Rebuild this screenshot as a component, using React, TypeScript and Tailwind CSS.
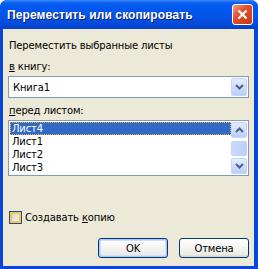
import React from "react";

const bodyFont = { fontFamily: '"DejaVu Sans", Verdana, sans-serif' };
const titleFont = { fontFamily: '"Liberation Sans", Arial, sans-serif' };

function ChevronDown() {
  return (
    <svg width="9" height="6" viewBox="0 0 9 6">
      <path d="M1 1 L4.5 4.5 L8 1" fill="none" stroke="#4D6185" strokeWidth="2" />
    </svg>
  );
}
function ChevronUp() {
  return (
    <svg width="9" height="6" viewBox="0 0 9 6">
      <path d="M1 5 L4.5 1.5 L8 5" fill="none" stroke="#4D6185" strokeWidth="2" />
    </svg>
  );
}

export default function App() {
  return (
    <div className="w-[258px] h-[269px] bg-white" style={bodyFont}>
      <div className="w-[258px] h-[269px] flex flex-col rounded-t-[7px] overflow-hidden bg-[#0846d8]">
        {/* Title bar */}
        <div className="h-[29px] flex items-center justify-between pl-[7px] pr-[5px] bg-[linear-gradient(to_bottom,#3a8cff_0px,#0a5ef0_3px,#0058ee_8px,#0553e6_18px,#0447d5_26px,#0840c4_29px)]">
          <span style={titleFont} className="text-white font-bold text-[12px] tracking-[0.1px] [text-shadow:1px_1px_0_#0a1f78]">
            Переместить или скопировать
          </span>
          <div className="w-[21px] h-[21px] rounded-[3px] border border-white flex items-center justify-center bg-[linear-gradient(135deg,#f2a08a,#e0512e_40%,#c9380f)]">
            <svg width="11" height="11" viewBox="0 0 11 11">
              <path d="M1.5 1.5 L9.5 9.5 M9.5 1.5 L1.5 9.5" stroke="white" strokeWidth="2.2" />
            </svg>
          </div>
        </div>
        {/* Body */}
        <div className="flex-1 ml-[3px] mr-[4px] mb-[3px] bg-[#ece9d8] flex flex-col px-[5px] text-[10px] tracking-[-0.15px] text-black leading-[13px]">
          <div className="mt-[10px] pl-[1px]">Переместить выбранные листы</div>
          <div className="mt-[8px] pl-[1px]">
            <span className="underline">в</span> книгу:
          </div>
          <div className="mt-[3px] h-[22px] border border-[#7f9db9] bg-white flex items-center justify-between pl-[4px] pr-[1px]">
            <span>Книга1</span>
            <div className="w-[16px] h-[18px] rounded-[2px] border border-[#c3d3fd] bg-[linear-gradient(to_bottom,#e4ecfe,#b9cdf9)] flex items-center justify-center">
              <ChevronDown />
            </div>
          </div>
          <div className="mt-[6px] pl-[1px]">
            <span className="underline">п</span>еред листом:
          </div>
          <div className="mt-[3px] h-[56px] border border-[#7f9db9] bg-white flex p-[1px]">
            <div className="flex-1 flex flex-col">
              <div className="h-[13px] bg-[#316ac5] text-white pl-[2px] outline outline-1 outline-dotted outline-[#f0b030] -outline-offset-1 leading-[13px]">
                Лист4
              </div>
              <div className="h-[13px] pl-[2px]">Лист1</div>
              <div className="h-[13px] pl-[2px]">Лист2</div>
              <div className="h-[13px] pl-[2px]">Лист3</div>
            </div>
            <div className="w-[16px] flex flex-col justify-between">
              <div className="h-[16px] rounded-[2px] border border-[#c3d3fd] bg-[linear-gradient(to_bottom,#e4ecfe,#b9cdf9)] flex items-center justify-center">
                <ChevronUp />
              </div>
              <div className="h-[15px] rounded-[2px] border border-[#c3d3fd] bg-[linear-gradient(to_right,#cad9fb,#bdd0fa)]" />
              <div className="h-[16px] rounded-[2px] border border-[#c3d3fd] bg-[linear-gradient(to_bottom,#e4ecfe,#b9cdf9)] flex items-center justify-center">
                <ChevronDown />
              </div>
            </div>
          </div>
          <div className="mt-[35px] flex items-center gap-[3px] pl-[1px]">
            <div className="w-[13px] h-[13px] border border-[#1c5180] bg-[#dcdcd7]">
              <div className="w-full h-full border-2 border-[#f9c35e] bg-[linear-gradient(135deg,#d8d6cc,#f4f3ee)]" />
            </div>
            <span>
              Создавать <span className="underline">к</span>опию
            </span>
          </div>
          <div className="mt-[14px] flex justify-end gap-[11px]">
            <div className="w-[70px] h-[20px] rounded-[3px] border border-[#003c74] bg-[linear-gradient(to_bottom,#ffffff,#ecebe6_85%,#d6d0c5)] flex items-center justify-center shadow-[inset_0_0_0_1px_#a9c6f5,inset_0_0_0_2px_#cee0fb]">
              OK
            </div>
            <div className="w-[70px] h-[20px] rounded-[3px] border border-[#003c74] bg-[linear-gradient(to_bottom,#ffffff,#ecebe6_85%,#d6d0c5)] flex items-center justify-center">
              Отмена
            </div>
          </div>
        </div>
      </div>
    </div>
  );
}
